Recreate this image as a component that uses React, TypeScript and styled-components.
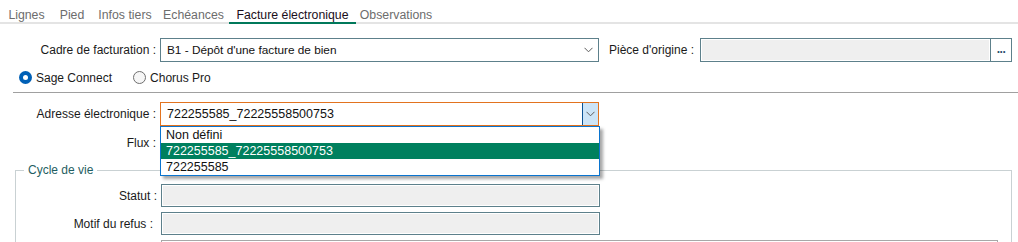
import styled, { createGlobalStyle } from 'styled-components'

const GlobalStyle = createGlobalStyle`
    html, body {
        margin: 0;
        padding: 0;
        background: #ffffff;
    }
    body {
        font-family: "Liberation Sans", Arial, sans-serif;
        font-size: 12px;
        color: #1a1a1a;
        overflow: hidden;
    }
`

const tabs = [
    { label: 'Lignes', width: 51 },
    { label: 'Pied', width: 40 },
    { label: 'Infos tiers', width: 66 },
    { label: 'Echéances', width: 71 },
    { label: 'Facture électronique', width: 127 },
    { label: 'Observations', width: 80 },
]

const options = ['Non défini', '722255585_72225558500753', '722255585']

function Chevron() {
    return (
        <svg width="9" height="6" viewBox="0 0 9 6">
            <path d="M0.5 0.8 L4.5 4.8 L8.5 0.8" fill="none" stroke="#5c5c5c" strokeWidth="1" />
        </svg>
    )
}

export default function App() {
    return (
        <>
            <GlobalStyle />
            <TabBar>
                {tabs.map(tab => (
                    <Tab key={tab.label} $width={tab.width} $active={tab.label === 'Facture électronique'}>
                        {tab.label}
                    </Tab>
                ))}
            </TabBar>

            <Form>
                <Row $labelWidth={156}>
                    <Label>Cadre de facturation :</Label>
                    <Combo>
                        <ComboText $size={11.8}>B1 - Dépôt d'une facture de bien</ComboText>
                        <ComboArrow><Chevron /></ComboArrow>
                    </Combo>
                    <SideLabel>Pièce d'origine :</SideLabel>
                    <ReadOnlyGroup>
                        <ReadOnlyFill />
                        <BrowseButton>...</BrowseButton>
                    </ReadOnlyGroup>
                </Row>

                <RadioRow>
                    <RadioOption $gap={21}>
                        <Radio $checked />
                        Sage Connect
                    </RadioOption>
                    <RadioOption $gap={0}>
                        <Radio $checked={false} />
                        Chorus Pro
                    </RadioOption>
                </RadioRow>

                <Separator />

                <Row $labelWidth={156} $top={9}>
                    <Label>Adresse électronique :</Label>
                    <ComboWrap>
                        <Combo $focused>
                            <ComboText $size={12.5}>722255585_72225558500753</ComboText>
                            <DropButton><Chevron /></DropButton>
                        </Combo>
                        <DropList>
                            {options.map((option, index) => (
                                <DropItem key={option} $selected={index === 1}>{option}</DropItem>
                            ))}
                        </DropList>
                    </ComboWrap>
                </Row>

                <Row $labelWidth={156} $top={5}>
                    <Label>Flux :</Label>
                    <Combo>
                        <ComboText $size={12} />
                        <ComboArrow><Chevron /></ComboArrow>
                    </Combo>
                </Row>

                <GroupBox>
                    <Legend>Cycle de vie</Legend>
                    <Row $labelWidth={141} $top={0}>
                        <Label>Statut :</Label>
                        <ReadOnlyField />
                    </Row>
                    <Row $labelWidth={137} $top={5} $gap={8}>
                        <Label>Motif du refus :</Label>
                        <ReadOnlyField />
                    </Row>
                    <Row $labelWidth={141} $top={5}>
                        <Label />
                        <MemoField />
                    </Row>
                </GroupBox>
            </Form>
        </>
    )
}

const TabBar = styled.div`
    display: flex;
    height: 22px;
    padding-left: 1px;
    border-bottom: 2px solid #e4e4e4;
`

const Tab = styled.div<{ $width: number; $active: boolean }>`
    width: ${props => props.$width}px;
    display: flex;
    align-items: center;
    justify-content: center;
    white-space: nowrap;
    font-size: 12.3px;
    color: ${props => props.$active ? '#1b0f1b' : '#6d6d6d'};
    border-bottom: 2px solid ${props => props.$active ? '#00785a' : 'transparent'};
    margin-bottom: -2px;
    padding-top: 7px;
    box-sizing: border-box;
`

const Form = styled.div`
    padding-top: 14px;
`

const Row = styled.div<{ $labelWidth: number; $top?: number; $gap?: number }>`
    display: flex;
    align-items: center;
    margin-top: ${props => props.$top ?? 0}px;
    & > :first-child {
        width: ${props => props.$labelWidth}px;
        margin-right: ${props => props.$gap ?? 4}px;
    }
`

const Label = styled.div`
    flex: none;
    text-align: right;
    white-space: nowrap;
    color: #1a1a1a;
`

const ComboWrap = styled.div`
    position: relative;
`

const Combo = styled.div<{ $focused?: boolean }>`
    width: 439px;
    height: 24px;
    box-sizing: border-box;
    display: flex;
    align-items: stretch;
    border: 1px solid ${props => props.$focused ? '#e2731f' : '#5d808b'};
    background: #ffffff;
`

const ComboText = styled.div<{ $size: number }>`
    flex: 1;
    display: flex;
    align-items: center;
    padding-left: 6px;
    font-size: ${props => props.$size}px;
    color: #111111;
    white-space: nowrap;
`

const ComboArrow = styled.div`
    width: 16px;
    display: flex;
    align-items: center;
    justify-content: center;
    padding-right: 2px;
`

const DropButton = styled.div`
    width: 15px;
    display: flex;
    align-items: center;
    justify-content: center;
    background: #cce4f7;
    border-left: 1px solid #0b5294;
`

const DropList = styled.div`
    position: absolute;
    top: 24px;
    left: 0;
    width: 440px;
    box-sizing: border-box;
    border: 1px solid #0a74cf;
    background: #ffffff;
    box-shadow: 3px 3px 3px rgba(0, 0, 0, 0.35);
    z-index: 2;
`

const DropItem = styled.div<{ $selected: boolean }>`
    height: 16px;
    line-height: 16px;
    padding-left: 5px;
    font-size: 12.5px;
    background: ${props => props.$selected ? '#00805e' : '#ffffff'};
    color: ${props => props.$selected ? '#ffffff' : '#111111'};
`

const SideLabel = styled.div`
    margin-left: 10px;
    margin-right: 6px;
    white-space: nowrap;
`

const ReadOnlyGroup = styled.div`
    flex: 1;
    height: 24px;
    margin-right: 6px;
    box-sizing: border-box;
    display: flex;
    border: 1px solid #5d808b;
`

const ReadOnlyFill = styled.div`
    flex: 1;
    background: #efefef;
    box-shadow: inset 0 0 0 1px #ffffff;
`

const BrowseButton = styled.div`
    width: 21px;
    border-left: 1px solid #5d808b;
    background: #ffffff;
    display: flex;
    align-items: center;
    justify-content: center;
    padding-bottom: 3px;
    box-sizing: border-box;
    font-weight: bold;
    font-size: 12px;
    letter-spacing: -0.5px;
    color: #2b4e6e;
`

const RadioRow = styled.div`
    display: flex;
    align-items: center;
    height: 17px;
    margin-top: 7px;
    padding-left: 19px;
`

const RadioOption = styled.div<{ $gap: number }>`
    display: flex;
    align-items: center;
    gap: 4px;
    margin-right: ${props => props.$gap}px;
    color: #1a1a1a;
`

const Radio = styled.span<{ $checked: boolean }>`
    width: 13px;
    height: 13px;
    box-sizing: border-box;
    border-radius: 50%;
    display: flex;
    align-items: center;
    justify-content: center;
    background: ${props => props.$checked ? '#0060b6' : '#f6f6f6'};
    border: ${props => props.$checked ? 'none' : '1px solid #6f6f6f'};
    &::after {
        content: '';
        display: ${props => props.$checked ? 'block' : 'none'};
        width: 5px;
        height: 5px;
        border-radius: 50%;
        background: #ffffff;
    }
`

const Separator = styled.div`
    height: 1px;
    background: #a0a0a0;
    margin: 6px 0 0 13px;
`

const GroupBox = styled.fieldset`
    margin: 8px 6px 0 15px;
    padding: 7px 0 0 0;
    border: 1px solid #c9d1d3;
    min-width: 0;
`

const Legend = styled.legend`
    margin-left: 8px;
    padding: 0 4px;
    color: #1f5e62;
    font-size: 12px;
    line-height: 14px;
`

const ReadOnlyField = styled.div`
    width: 439px;
    height: 23px;
    box-sizing: border-box;
    border: 1px solid #5d808b;
    background: #efefef;
    box-shadow: inset 0 0 0 1px #ffffff;
`

const MemoField = styled.div`
    width: 837px;
    height: 40px;
    box-sizing: border-box;
    border: 1px solid #a8a8a8;
    background: #ffffff;
`
